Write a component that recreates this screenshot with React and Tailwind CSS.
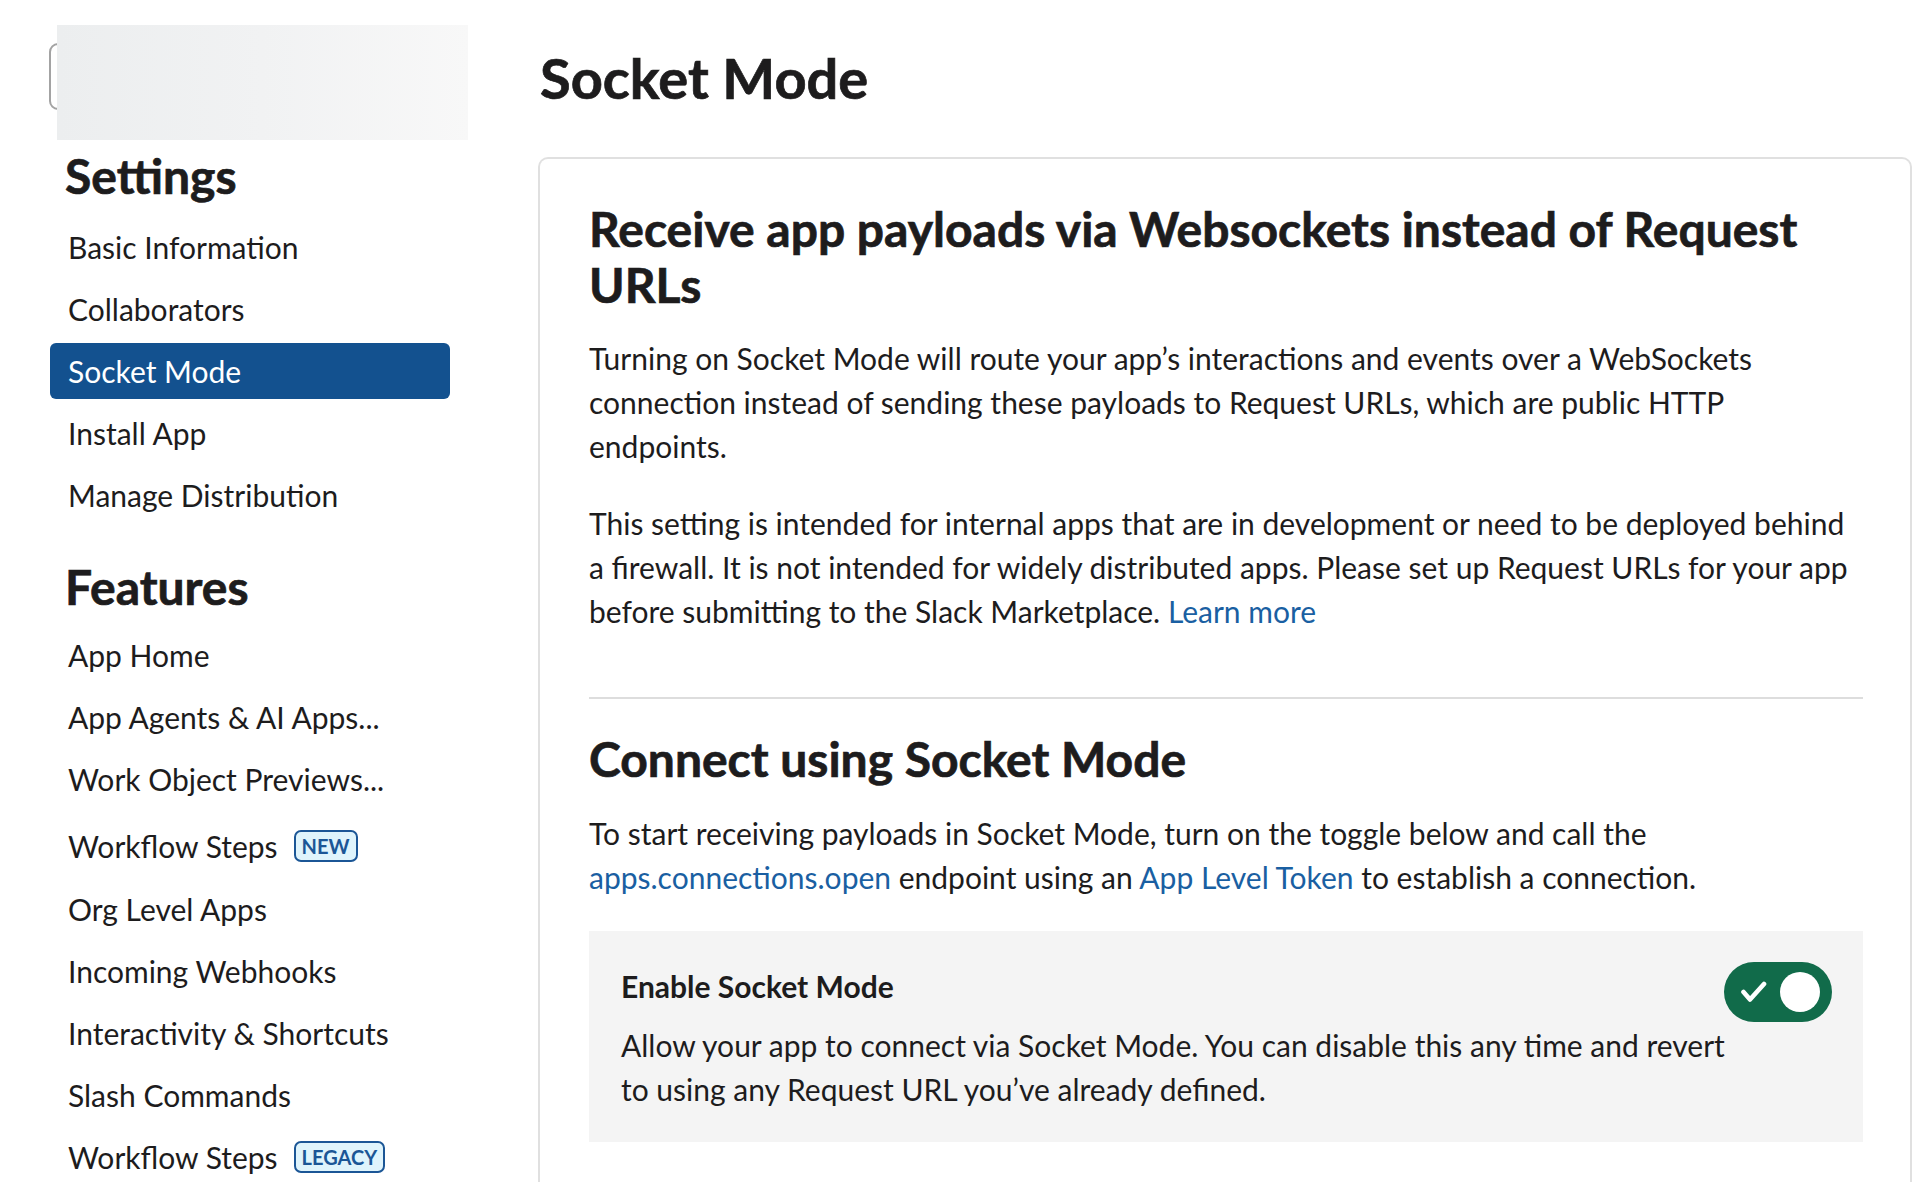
import React from "react";

const settingsItems = [
  { label: "Basic Information" },
  { label: "Collaborators" },
  { label: "Socket Mode", active: true },
  { label: "Install App" },
  { label: "Manage Distribution" },
];

const featureItems = [
  { label: "App Home" },
  { label: "App Agents & AI Apps..." },
  { label: "Work Object Previews..." },
  { label: "Workflow Steps", badge: "NEW" },
  { label: "Org Level Apps" },
  { label: "Incoming Webhooks" },
  { label: "Interactivity & Shortcuts" },
  { label: "Slash Commands" },
  { label: "Workflow Steps", badge: "LEGACY" },
];

function Badge({ children }) {
  return (
    <span className="ml-[16px] flex h-[32px] items-center rounded-[7px] border-2 border-[#1b5696] bg-[#dff4fc] px-[6px] text-[20px] font-bold leading-none text-[#1b5696]">
      {children}
    </span>
  );
}

function NavItem({ item }) {
  return (
    <div
      className={`flex items-center ${
        item.badge === "NEW" ? "h-[68px] pt-[4px]" : "h-[62px]"
      }`}
    >
      <div
        className={`flex h-[56px] w-full items-center rounded-[6px] px-[18px] text-[30px] leading-[1.2] ${
          item.active ? "bg-[#13518f] text-white" : "text-[#1d1c1d]"
        }`}
      >
        <span>{item.label}</span>
        {item.badge && <Badge>{item.badge}</Badge>}
      </div>
    </div>
  );
}

function Toggle() {
  return (
    <div className="flex h-[60px] w-[108px] shrink-0 items-center justify-between rounded-full bg-[#116b4a] pl-[17px] pr-[12px]">
      <svg width="26" height="24" viewBox="0 0 26 24" fill="none">
        <path
          d="M2.5 12 L9 19.5 L23 4"
          stroke="white"
          strokeWidth="4.6"
          strokeLinecap="round"
          strokeLinejoin="round"
        />
      </svg>
      <div className="h-[40px] w-[40px] rounded-full bg-white" />
    </div>
  );
}

const linkCls = "text-[#1a5fa2]";
const heavy = "font-bold [-webkit-text-stroke:0.7px_#1d1c1d]";

export default function App() {
  return (
    <div className="flex h-[1182px] w-[1912px] overflow-hidden bg-white font-['Lato',sans-serif] text-[#1d1c1d]">
      <aside className="w-[538px] shrink-0">
        <div className="relative mt-[25px] h-[115px]">
          <div className="absolute left-[49px] top-[18px] h-[67px] w-[380px] rounded-[9px] border-2 border-[#a3a3a3]" />
          <div className="absolute left-[57px] top-0 h-[115px] w-[411px] bg-linear-to-r from-[#eceeef] via-[#f1f2f3] to-[#f8f8f8]" />
        </div>
        <nav className="w-[450px] pl-[50px]">
          <h2 className={`flex h-[76px] items-center pb-[5px] pl-[15px] text-[48px] leading-[1.2] ${heavy}`}>
            Settings
          </h2>
          {settingsItems.map((it, i) => (
            <NavItem key={i} item={it} />
          ))}
          <h2 className={`mt-[23px] flex h-[75px] items-center pl-[15px] text-[48px] leading-[1.2] ${heavy}`}>
            Features
          </h2>
          {featureItems.map((it, i) => (
            <NavItem key={i} item={it} />
          ))}
        </nav>
      </aside>

      <main className="min-w-0 flex-1 pt-[44px]">
        <h1 className={`ml-[2px] text-[56px] leading-[1.2] ${heavy}`}>Socket Mode</h1>
        <section className="mt-[46px] rounded-t-[10px] border-2 border-b-0 border-[#e0e0e0] pb-[200px] pl-[49px] pr-[47px] pt-[42px]">
          <h2 className={`whitespace-nowrap text-[48px] leading-[56px] ${heavy}`}>
            Receive app payloads via Websockets instead of Request
            <br />
            URLs
          </h2>
          <p className="mt-[23px] whitespace-nowrap text-[30px] leading-[44px]">
            Turning on Socket Mode will route your app’s interactions and events over a WebSockets
            <br />
            connection instead of sending these payloads to Request URLs, which are public HTTP
            <br />
            endpoints.
          </p>
          <p className="mt-[33px] whitespace-nowrap text-[30px] leading-[44px]">
            This setting is intended for internal apps that are in development or need to be deployed behind
            <br />
            a firewall. It is not intended for widely distributed apps. Please set up Request URLs for your app
            <br />
            before submitting to the Slack Marketplace. <a className={linkCls}>Learn more</a>
          </p>
          <div className="mt-[64px] h-[2px] bg-[#dddddd]" />
          <h2 className={`mt-[32px] whitespace-nowrap text-[48px] leading-[56px] ${heavy}`}>
            Connect using Socket Mode
          </h2>
          <p className="mt-[24px] whitespace-nowrap text-[30px] leading-[44px]">
            To start receiving payloads in Socket Mode, turn on the toggle below and call the
            <br />
            <a className={linkCls}>apps.connections.open</a> endpoint using an{" "}
            <a className={linkCls}>App Level Token</a> to establish a connection.
          </p>
          <div className="mt-[32px] flex bg-[#f4f4f4] pb-[31px] pl-[32px] pr-[31px] pt-[31px]">
            <div className="min-w-0 flex-1 pt-[2px]">
              <div className="text-[30px] font-bold leading-[44px]">Enable Socket Mode</div>
              <p className="mt-[15px] whitespace-nowrap text-[30px] leading-[44px]">
                Allow your app to connect via Socket Mode. You can disable this any time and revert
                <br />
                to using any Request URL you’ve already defined.
              </p>
            </div>
            <Toggle />
          </div>
        </section>
      </main>
    </div>
  );
}
